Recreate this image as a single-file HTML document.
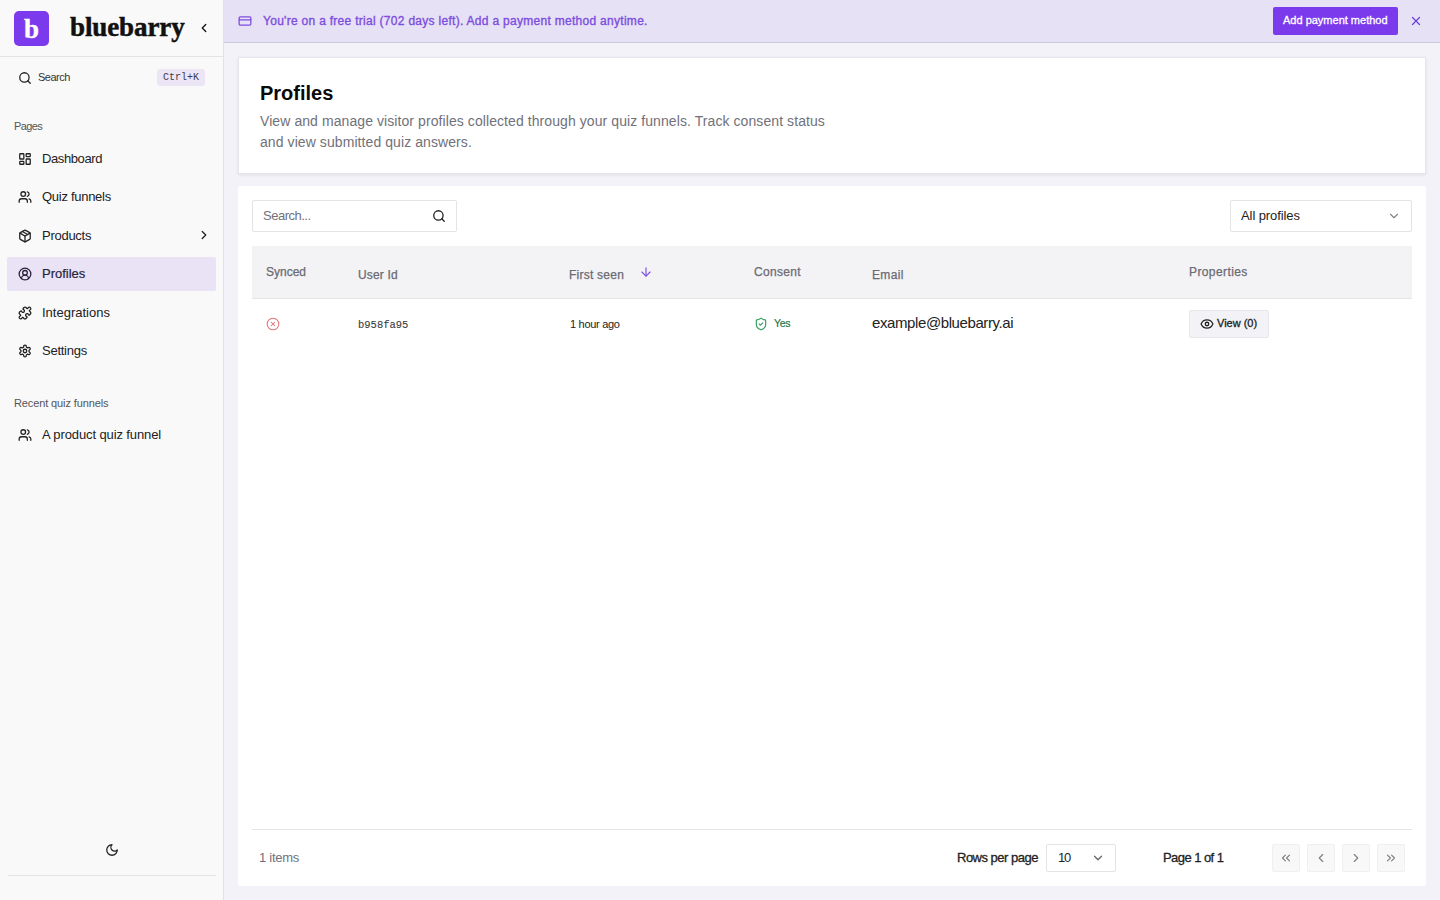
<!DOCTYPE html>
<html><head><meta charset="utf-8">
<style>
*{box-sizing:border-box;margin:0;padding:0}
html,body{width:1440px;height:900px;overflow:hidden}
body{font-family:"Liberation Sans",sans-serif;background:#f2f2f8;color:#18181b;position:relative}
.abs{position:absolute}
svg{position:absolute;fill:none;stroke:currentColor;stroke-width:2.2;stroke-linecap:round;stroke-linejoin:round}
#sb{position:absolute;left:0;top:0;width:224px;height:900px;background:#f9f9f9;border-right:1px solid #e2e2e5}
.t{position:absolute;white-space:nowrap;line-height:1}
</style></head><body>
<div id="sb">
  <div class="abs" style="left:14px;top:11px;width:35px;height:35px;background:#7c3aed;border-radius:5px"></div>
  <div class="t" style="left:24px;top:16px;font-family:'Liberation Serif',serif;font-weight:700;font-size:27px;-webkit-text-stroke:0.4px #fff;color:#fff">b</div>
  <div class="t" style="left:70px;top:14px;font-family:'Liberation Serif',serif;font-weight:700;font-size:27px;letter-spacing:-0.1px;-webkit-text-stroke:0.5px #111;color:#111">bluebarry</div>
  <svg style="left:197px;top:21px;color:#111" width="14" height="14" viewBox="0 0 24 24"><path d="m15 18-6-6 6-6"/></svg>
  <div class="abs" style="left:0;top:56px;width:223px;height:1px;background:#e4e4e7"></div>

  <svg style="left:18px;top:71px;color:#222" width="14" height="14" viewBox="0 0 24 24"><circle cx="11" cy="11" r="8"/><path d="m21 21-4.3-4.3"/></svg>
  <div class="t" style="left:38px;top:72px;font-size:11px;letter-spacing:-0.5px;color:#333">Search</div>
  <div class="abs" style="left:157px;top:69px;width:48px;height:17px;background:#ebe5f6;border-radius:3px"></div>
  <div class="t" style="left:163px;top:73px;font-family:'Liberation Mono',monospace;font-size:10px;color:#3f3a4a">Ctrl+K</div>

  <div class="t" style="left:14px;top:121px;font-size:11px;letter-spacing:-0.6px;color:#555">Pages</div>

  <svg style="left:18px;top:152px;color:#222" width="14" height="14" viewBox="0 0 24 24"><rect width="7" height="9" x="3" y="3" rx="1"/><rect width="7" height="5" x="14" y="3" rx="1"/><rect width="7" height="9" x="14" y="12" rx="1"/><rect width="7" height="5" x="3" y="16" rx="1"/></svg>
  <div class="t" style="left:42px;top:152px;font-size:13px;letter-spacing:-0.4px;color:#222">Dashboard</div>

  <svg style="left:18px;top:190px;color:#222" width="14" height="14" viewBox="0 0 24 24"><path d="M16 21v-2a4 4 0 0 0-4-4H6a4 4 0 0 0-4 4v2"/><circle cx="9" cy="7" r="4"/><path d="M22 21v-2a4 4 0 0 0-3-3.87"/><path d="M16 3.13a4 4 0 0 1 0 7.75"/></svg>
  <div class="t" style="left:42px;top:190px;font-size:13px;letter-spacing:-0.28px;color:#222">Quiz funnels</div>

  <svg style="left:18px;top:229px;color:#222" width="14" height="14" viewBox="0 0 24 24"><path d="m7.5 4.27 9 5.15"/><path d="M21 8a2 2 0 0 0-1-1.73l-7-4a2 2 0 0 0-2 0l-7 4A2 2 0 0 0 3 8v8a2 2 0 0 0 1 1.73l7 4a2 2 0 0 0 2 0l7-4A2 2 0 0 0 21 16Z"/><path d="m3.3 7 8.7 5 8.7-5"/><path d="M12 22V12"/></svg>
  <div class="t" style="left:42px;top:229px;font-size:13px;letter-spacing:-0.27px;color:#222">Products</div>
  <svg style="left:197px;top:228px;color:#222" width="14" height="14" viewBox="0 0 24 24"><path d="m9 18 6-6-6-6"/></svg>

  <div class="abs" style="left:7px;top:257px;width:209px;height:34px;background:#e9e3f5;border-radius:2px"></div>
  <svg style="left:18px;top:267px;color:#2a2340" width="14" height="14" viewBox="0 0 24 24"><path d="M18 20a6 6 0 0 0-12 0"/><circle cx="12" cy="10" r="4"/><circle cx="12" cy="12" r="10"/></svg>
  <div class="t" style="left:42px;top:267px;font-size:13px;-webkit-text-stroke:0.2px #2a2340;color:#2a2340">Profiles</div>

  <svg style="left:18px;top:306px;color:#222" width="14" height="14" viewBox="0 0 24 24"><path d="M19.439 7.85c-.049.322.059.648.289.878l1.568 1.568c.47.47.706 1.087.706 1.704s-.235 1.233-.706 1.704l-1.611 1.611a.98.98 0 0 1-.837.276c-.47-.07-.802-.48-.968-.925a2.501 2.501 0 1 0-3.214 3.214c.446.166.855.497.925.968a.979.979 0 0 1-.276.837l-1.61 1.61a2.404 2.404 0 0 1-1.705.707 2.402 2.402 0 0 1-1.704-.706l-1.568-1.568a1.026 1.026 0 0 0-.877-.29c-.493.074-.84.504-1.02.968a2.5 2.5 0 1 1-3.237-3.237c.464-.18.894-.527.967-1.020a1.026 1.026 0 0 0-.289-.877l-1.568-1.568A2.402 2.402 0 0 1 1.998 12c0-.617.236-1.234.706-1.704L4.23 8.77c.24-.24.581-.353.917-.303.515.077.877.528 1.073 1.01a2.5 2.5 0 1 0 3.259-3.259c-.482-.196-.933-.558-1.010-1.073-.05-.336.062-.676.303-.917l1.525-1.525A2.402 2.402 0 0 1 12 1.998c.617 0 1.234.236 1.704.706l1.568 1.568c.23.23.556.338.877.29.493-.074.84-.504 1.020-.968a2.5 2.5 0 1 1 3.237 3.237c-.464.18-.894.527-.967 1.020Z"/></svg>
  <div class="t" style="left:42px;top:306px;font-size:13px;color:#222">Integrations</div>

  <svg style="left:18px;top:344px;color:#222" width="14" height="14" viewBox="0 0 24 24"><path d="M12.22 2h-.44a2 2 0 0 0-2 2v.18a2 2 0 0 1-1 1.73l-.43.25a2 2 0 0 1-2 0l-.15-.08a2 2 0 0 0-2.73.73l-.22.38a2 2 0 0 0 .73 2.73l.15.1a2 2 0 0 1 1 1.72v.51a2 2 0 0 1-1 1.74l-.15.09a2 2 0 0 0-.73 2.73l.22.38a2 2 0 0 0 2.73.73l.15-.08a2 2 0 0 1 2 0l.43.25a2 2 0 0 1 1 1.73V20a2 2 0 0 0 2 2h.44a2 2 0 0 0 2-2v-.18a2 2 0 0 1 1-1.73l.43-.25a2 2 0 0 1 2 0l.15.08a2 2 0 0 0 2.73-.73l.22-.39a2 2 0 0 0-.73-2.730l-.15-.08a2 2 0 0 1-1-1.74v-.5a2 2 0 0 1 1-1.74l.15-.09a2 2 0 0 0 .73-2.73l-.22-.38a2 2 0 0 0-2.73-.73l-.15.08a2 2 0 0 1-2 0l-.43-.25a2 2 0 0 1-1-1.73V4a2 2 0 0 0-2-2z"/><circle cx="12" cy="12" r="3"/></svg>
  <div class="t" style="left:42px;top:344px;font-size:13px;letter-spacing:-0.26px;color:#222">Settings</div>

  <div class="t" style="left:14px;top:398px;font-size:11px;letter-spacing:-0.12px;color:#555">Recent quiz funnels</div>
  <svg style="left:18px;top:428px;color:#222" width="14" height="14" viewBox="0 0 24 24"><path d="M16 21v-2a4 4 0 0 0-4-4H6a4 4 0 0 0-4 4v2"/><circle cx="9" cy="7" r="4"/><path d="M22 21v-2a4 4 0 0 0-3-3.87"/><path d="M16 3.13a4 4 0 0 1 0 7.75"/></svg>
  <div class="t" style="left:42px;top:428px;font-size:13px;letter-spacing:-0.11px;color:#222">A product quiz funnel</div>

  <svg style="left:105px;top:843px;color:#222" width="14" height="14" viewBox="0 0 24 24"><path d="M12 3a6 6 0 0 0 9 9 9 9 0 1 1-9-9Z"/></svg>
  <div class="abs" style="left:8px;top:875px;width:208px;height:1px;background:#e4e4e7"></div>
</div>

<!-- banner -->
<div class="abs" style="left:224px;top:0;width:1216px;height:43px;background:#e7e1f6;border-bottom:1px solid #ccc7da"></div>
<svg style="left:238px;top:14px;color:#7c4ddf" width="14" height="14" viewBox="0 0 24 24"><rect width="20" height="14" x="2" y="5" rx="2"/><line x1="2" x2="22" y1="10" y2="10"/></svg>
<div class="t" style="left:263px;top:15px;font-size:12px;letter-spacing:0.29px;-webkit-text-stroke:0.35px #7c4ddf;color:#7c4ddf">You're on a free trial (702 days left). Add a payment method anytime.</div>
<div class="abs" style="left:1273px;top:7px;width:125px;height:28px;background:#7c3aed;border-radius:2px"></div>
<div class="t" style="left:1283px;top:15px;font-size:11px;-webkit-text-stroke:0.3px #fff;color:#fff">Add payment method</div>
<svg style="left:1409px;top:14px;color:#6d3fd6" width="14" height="14" viewBox="0 0 24 24"><path d="M18 6 6 18"/><path d="m6 6 12 12"/></svg>

<!-- header card -->
<div class="abs" style="left:238px;top:57px;width:1188px;height:117px;background:#fff;border:1px solid #e6e6ea;box-shadow:0 1px 3px rgba(0,0,0,.08)"></div>
<div class="t" style="left:260px;top:83px;font-size:20px;font-weight:700;color:#0a0a0a">Profiles</div>
<div class="t" style="left:260px;top:111px;font-size:14px;letter-spacing:0.08px;color:#71717a;line-height:21px;white-space:normal;width:580px">View and manage visitor profiles collected through your quiz funnels. Track consent status and view submitted quiz answers.</div>

<!-- table card -->
<div class="abs" style="left:238px;top:186px;width:1188px;height:700px;background:#fff;border-radius:2px"></div>
<div class="abs" style="left:252px;top:200px;width:205px;height:32px;border:1px solid #e4e4e7;border-radius:2px;background:#fff"></div>
<div class="t" style="left:263px;top:209px;font-size:13px;letter-spacing:-0.5px;color:#71717a">Search...</div>
<svg style="left:432px;top:209px;color:#222" width="14" height="14" viewBox="0 0 24 24"><circle cx="11" cy="11" r="8"/><path d="m21 21-4.3-4.3"/></svg>

<div class="abs" style="left:1230px;top:200px;width:182px;height:32px;border:1px solid #e4e4e7;border-radius:2px;background:#fff"></div>
<div class="t" style="left:1241px;top:209px;font-size:13px;letter-spacing:-0.09px;color:#222">All profiles</div>
<svg style="left:1387px;top:209px;color:#808080;stroke-width:1.9" width="14" height="14" viewBox="0 0 24 24"><path d="m6 9 6 6 6-6"/></svg>

<div class="abs" style="left:252px;top:246px;width:1160px;height:53px;background:#f3f3f5;border-bottom:1px solid #e4e4e7"></div>
<div class="t" style="left:266px;top:266px;font-size:12px;-webkit-text-stroke:0.25px #6a6a72;color:#6a6a72">Synced</div>
<div class="t" style="left:358px;top:269px;font-size:12px;letter-spacing:0.15px;-webkit-text-stroke:0.25px #6a6a72;color:#6a6a72">User Id</div>
<div class="t" style="left:569px;top:269px;font-size:12px;letter-spacing:0.24px;-webkit-text-stroke:0.25px #6a6a72;color:#6a6a72">First seen</div>
<svg style="left:639px;top:265px;color:#7b4fdc;stroke-width:2" width="14" height="14" viewBox="0 0 24 24"><path d="M12 5v14"/><path d="m19 12-7 7-7-7"/></svg>
<div class="t" style="left:754px;top:266px;font-size:12px;letter-spacing:0.33px;-webkit-text-stroke:0.25px #6a6a72;color:#6a6a72">Consent</div>
<div class="t" style="left:872px;top:269px;font-size:12px;letter-spacing:0.37px;-webkit-text-stroke:0.25px #6a6a72;color:#6a6a72">Email</div>
<div class="t" style="left:1189px;top:266px;font-size:12px;letter-spacing:0.4px;-webkit-text-stroke:0.25px #6a6a72;color:#6a6a72">Properties</div>

<svg style="left:266px;top:317px;color:#e27676;stroke-width:1.8" width="14" height="14" viewBox="0 0 24 24"><circle cx="12" cy="12" r="10"/><path d="m15 9-6 6"/><path d="m9 9 6 6"/></svg>
<div class="t" style="left:358px;top:320px;font-family:'Liberation Mono',monospace;font-size:10.5px;-webkit-text-stroke:0.1px #3a3a3a;color:#3a3a3a">b958fa95</div>
<div class="t" style="left:570px;top:319px;font-size:11px;letter-spacing:-0.29px;color:#222">1 hour ago</div>
<svg style="left:754px;top:317px;color:#33a060;stroke-width:2" width="14" height="14" viewBox="0 0 24 24"><path d="M20 13c0 5-3.5 7.5-7.66 8.95a1 1 0 0 1-.67-.01C7.5 20.5 4 18 4 13V6a1 1 0 0 1 1-1c2 0 4.5-1.2 6.24-2.72a1.17 1.17 0 0 1 1.52 0C14.51 3.81 17 5 19 5a1 1 0 0 1 1 1z"/><path d="m9 12 2 2 4-4"/></svg>
<div class="t" style="left:774px;top:318px;font-size:10.5px;letter-spacing:-0.3px;-webkit-text-stroke:0.2px #2a7a48;color:#2a7a48">Yes</div>
<div class="t" style="left:872px;top:315px;font-size:15px;letter-spacing:-0.4px;color:#222">example@bluebarry.ai</div>
<div class="abs" style="left:1189px;top:310px;width:80px;height:28px;background:#f3f3f7;border:1px solid #e8e8ec;border-radius:2px"></div>
<svg style="left:1200px;top:317px;color:#222" width="14" height="14" viewBox="0 0 24 24"><path d="M2.062 12.348a1 1 0 0 1 0-.696 10.75 10.75 0 0 1 19.876 0 1 1 0 0 1 0 .696 10.75 10.75 0 0 1-19.876 0"/><circle cx="12" cy="12" r="3"/></svg>
<div class="t" style="left:1217px;top:318px;font-size:11px;-webkit-text-stroke:0.3px #222;color:#222">View (0)</div>

<div class="abs" style="left:252px;top:829px;width:1160px;height:1px;background:#e4e4e7"></div>
<div class="t" style="left:259px;top:851px;font-size:13px;letter-spacing:-0.27px;color:#71717a">1 items</div>
<div class="t" style="left:957px;top:851px;font-size:13px;letter-spacing:-0.5px;-webkit-text-stroke:0.3px #222;color:#222">Rows per page</div>
<div class="abs" style="left:1046px;top:844px;width:70px;height:28px;border:1px solid #e4e4e7;border-radius:2px"></div>
<div class="t" style="left:1058px;top:851px;font-size:13px;letter-spacing:-1.2px;color:#222">10</div>
<svg style="left:1091px;top:851px;color:#666" width="14" height="14" viewBox="0 0 24 24"><path d="m6 9 6 6 6-6"/></svg>
<div class="t" style="left:1163px;top:851px;font-size:13px;letter-spacing:-0.56px;-webkit-text-stroke:0.3px #222;color:#222">Page 1 of 1</div>

<div class="abs" style="left:1272px;top:844px;width:28px;height:28px;background:#f8f8f9;border:1px solid #f0f0f2;border-radius:2px"></div>
<div class="abs" style="left:1307px;top:844px;width:28px;height:28px;background:#f8f8f9;border:1px solid #f0f0f2;border-radius:2px"></div>
<div class="abs" style="left:1342px;top:844px;width:28px;height:28px;background:#f8f8f9;border:1px solid #f0f0f2;border-radius:2px"></div>
<div class="abs" style="left:1377px;top:844px;width:28px;height:28px;background:#f8f8f9;border:1px solid #f0f0f2;border-radius:2px"></div>
<svg style="left:1279px;top:851px;color:#808080;stroke-width:2" width="14" height="14" viewBox="0 0 24 24"><path d="m11 17-5-5 5-5"/><path d="m18 17-5-5 5-5"/></svg>
<svg style="left:1314px;top:851px;color:#808080;stroke-width:2" width="14" height="14" viewBox="0 0 24 24"><path d="m15 18-6-6 6-6"/></svg>
<svg style="left:1349px;top:851px;color:#808080;stroke-width:2" width="14" height="14" viewBox="0 0 24 24"><path d="m9 18 6-6-6-6"/></svg>
<svg style="left:1384px;top:851px;color:#808080;stroke-width:2" width="14" height="14" viewBox="0 0 24 24"><path d="m6 17 5-5-5-5"/><path d="m13 17 5-5-5-5"/></svg>
</body></html>
